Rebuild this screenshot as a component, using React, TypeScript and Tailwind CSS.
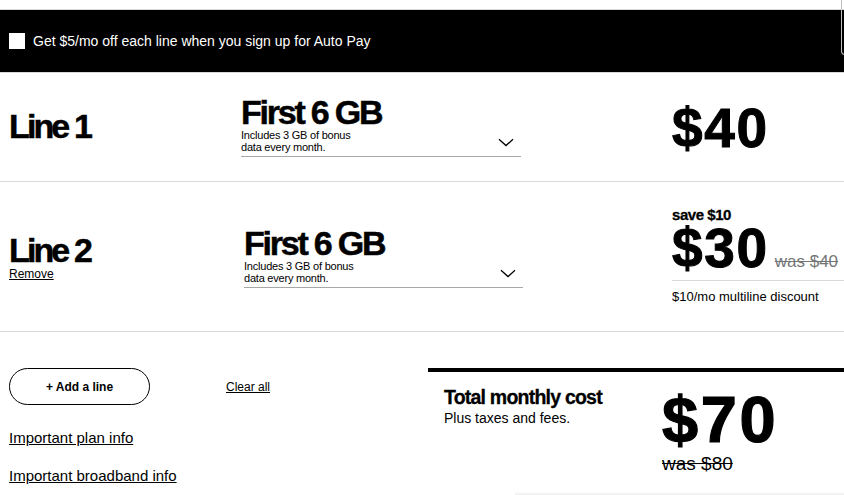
import React from "react";

function Chevron({ className }: { className?: string }) {
  return (
    <svg className={className} width="16" height="9" viewBox="0 0 16 9" fill="none">
      <path d="M1 1.2 L8 7.6 L15 1.2" stroke="#000" strokeWidth="1.3" />
    </svg>
  );
}

function PlanSelect({ wClass }: { wClass: string }) {
  return (
    <div className={`relative ${wClass} border-b border-[#a7a7a7] pb-[3px]`}>
      <div className="text-[34px] leading-none font-bold tracking-[-0.065em] [-webkit-text-stroke:0.5px_#000]">First 6 GB</div>
      <div className="mt-[1px] text-[11px] leading-[11.5px] tracking-[-0.02em]">
        <div>Includes 3 GB of bonus</div>
        <div>data every month.</div>
      </div>
      <Chevron className="absolute right-[7px] bottom-[9px]" />
    </div>
  );
}

export default function App() {
  return (
    <div className="relative w-[844px] h-[495px] overflow-hidden bg-white text-black font-['Liberation_Sans',Arial,sans-serif]">
      <div className="h-[9px]" />
      <div className="h-[63px] bg-black border-t border-[#d8dada] flex items-center pl-[9px] gap-[8px]">
        <div className="w-[16px] h-[16px] bg-white" />
        <span className="text-white text-[14px] leading-none">Get $5/mo off each line when you sign up for Auto Pay</span>
      </div>
      <div className="h-px bg-[#d8dada]" />

      {/* Line 1 */}
      <div className="h-[109px] border-b border-[#d8dada] flex pl-[9px]">
        <div className="w-[232px] pt-[36px]">
          <div className="text-[34px] leading-none font-bold tracking-[-0.085em] [-webkit-text-stroke:0.5px_#000]">Line 1</div>
        </div>
        <div className="pt-[22px]">
          <PlanSelect wClass="w-[280px]" />
        </div>
        <div className="pl-[151px] pt-[28px]">
          <div className="text-[55px] leading-none font-bold tracking-[0.03em] [-webkit-text-stroke:1px_#000]">$40</div>
        </div>
      </div>

      {/* Line 2 */}
      <div className="h-[150px] border-b border-[#d8dada] flex pl-[9px]">
        <div className="w-[235px] pt-[51px]">
          <div className="text-[34px] leading-none font-bold tracking-[-0.085em] [-webkit-text-stroke:0.5px_#000]">Line 2</div>
          <div className="text-[12px] leading-none underline mt-[1px]">Remove</div>
        </div>
        <div className="pt-[44px]">
          <PlanSelect wClass="w-[279px]" />
        </div>
        <div className="flex-1 pl-[149px] pt-[25px]">
          <div className="text-[15px] leading-none font-bold tracking-[-0.03em] [-webkit-text-stroke:0.3px_#000]">save $10</div>
          <div className="flex items-baseline border-b border-[#d8dada] pb-[8px] mt-[2px]">
            <span className="text-[55px] leading-[48px] font-bold tracking-[0.03em] [-webkit-text-stroke:1px_#000]">$30</span>
            <span className="ml-[6px] text-[17px] leading-none text-[#747676] line-through">was $40</span>
          </div>
          <div className="mt-[9px] text-[13px] leading-none">$10/mo multiline discount</div>
        </div>
      </div>

      {/* Bottom */}
      <div className="flex">
        <div className="w-[428px] pl-[9px] pt-[36px]">
          <div className="flex items-center">
            <button className="w-[141px] h-[37px] rounded-full border border-black text-[12px] font-bold leading-none">
              + Add a line
            </button>
            <span className="ml-[76px] text-[12px] leading-none underline">Clear all</span>
          </div>
          <div className="mt-[25px] text-[15px] leading-none underline">Important plan info</div>
          <div className="mt-[23px] text-[15px] leading-none underline">Important broadband info</div>
        </div>
        <div className="flex-1 mt-[36px] border-t-[4px] border-black flex pl-[16px] pt-[16px]">
          <div className="w-[218px]">
            <div className="text-[19.5px] leading-none font-bold tracking-[-0.04em] [-webkit-text-stroke:0.3px_#000]">Total monthly cost</div>
            <div className="mt-[3px] text-[14px] leading-none">Plus taxes and fees.</div>
          </div>
          <div className="-mt-[1px]">
            <div className="text-[65px] leading-none font-bold tracking-[0.04em] [-webkit-text-stroke:1.2px_#000]">$70</div>
            <div className="mt-[2px] text-[19px] leading-none line-through">was $80</div>
          </div>
        </div>
      </div>

      {/* overlapping edge of a floating panel at top right */}
      <div className="absolute left-[841px] -top-[10px] w-[20px] h-[65px] border-l border-b border-[#bdbdbd] rounded-bl-[4px]" />
      {/* faint shadow of sticky footer */}
      <div className="absolute left-[515px] right-0 bottom-0 h-[3px] bg-gradient-to-b from-white to-[#ececec]" />
    </div>
  );
}
